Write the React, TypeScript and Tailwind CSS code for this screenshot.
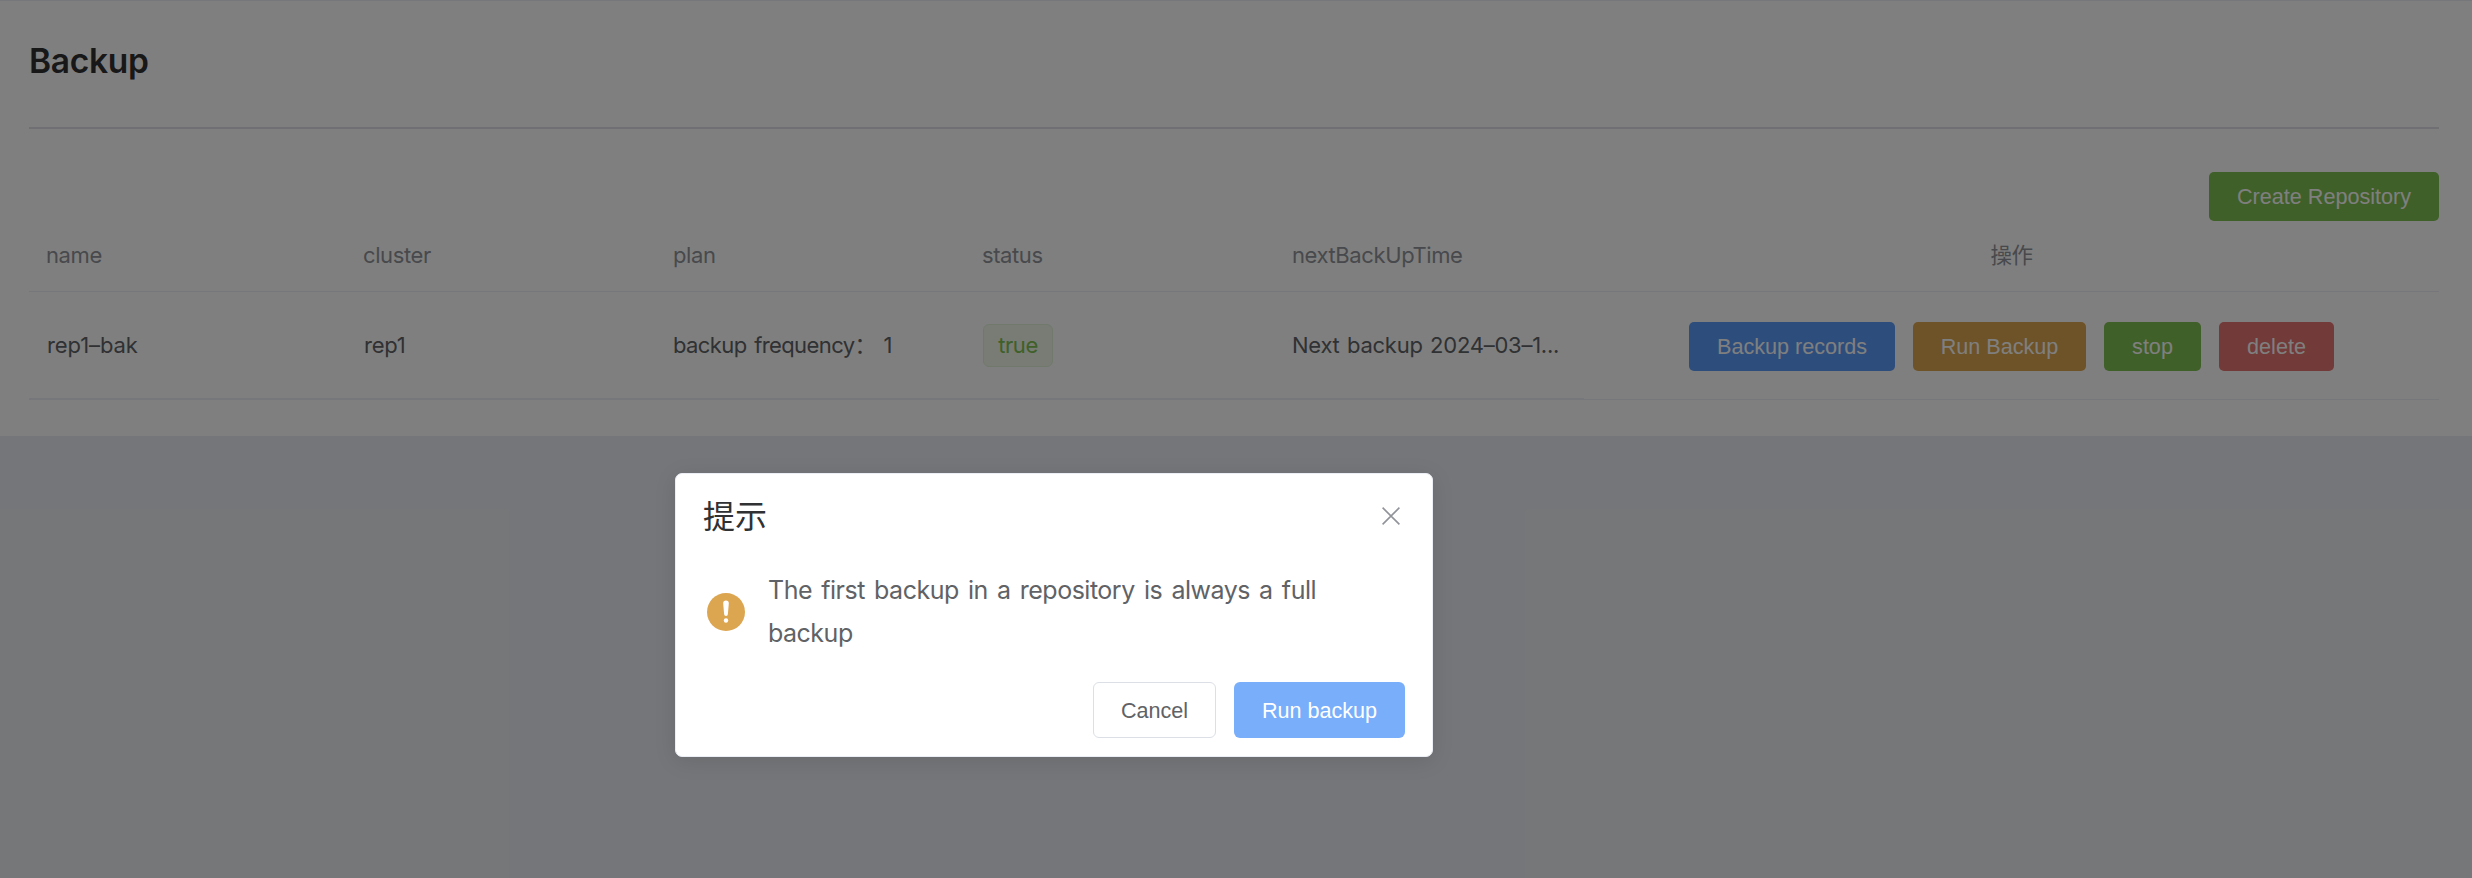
import React from "react";

const columns = "grid grid-cols-[317px_309px_310px_310px_309px_855px]";

type ActionProps = { label: string; className: string };

function Action({ label, className }: ActionProps) {
  return (
    <button
      className={`flex h-[49px] items-center justify-center rounded-[5px] pt-[2px] font-['Liberation_Sans',sans-serif] text-[21.6px] tracking-normal text-white ${className}`}
    >
      {label}
    </button>
  );
}

function BackupPage() {
  return (
    <section className="h-[436px] border-t border-[#ebeef5] bg-white pr-[33px] pl-[29px]">
      <h1 className="flex h-[126px] items-center pb-[5px] text-[33.5px] font-semibold tracking-[-0.3px] text-[#303133]">
        Backup
      </h1>
      <div className="h-[2px] bg-[#dfdfe8]" />
      <div className="mt-[43px] flex justify-end">
        <Action label="Create Repository" className="w-[230px] bg-[#7ec050]" />
      </div>
      <div
        className={`${columns} h-[71px] items-center border-b border-[#ebeef5] pb-[2px] text-[22px] tracking-[-0.4px] text-[#909399]`}
      >
        <div className="pl-[17px]">name</div>
        <div className="pl-[17px]">cluster</div>
        <div className="pl-[18px]">plan</div>
        <div className="pl-[17px]">status</div>
        <div className="pl-[17px]">nextBackUpTime</div>
        <div className="text-center text-[21.5px]">操作</div>
      </div>
      <div className={`${columns} h-[108px] text-[22px] tracking-[-0.4px] text-[#606266]`}>
        <div className="flex items-center border-b-2 border-[#ebeef5] pt-px pl-[18px] tracking-[-0.1px]">rep1–bak</div>
        <div className="flex items-center border-b-2 border-[#ebeef5] pt-px pl-[18px] tracking-[-0.2px]">rep1</div>
        <div className="flex items-center border-b-2 border-[#ebeef5] pt-px pl-[18px] tracking-[-0.6px] [word-spacing:2px]">
          backup frequency： 1
        </div>
        <div className="flex items-center border-b-2 border-[#ebeef5] pt-px pl-[18px]">
          <span className="flex h-[43px] w-[70px] items-center justify-center rounded-[6px] border border-[#e1f3d8] bg-[#f0f9eb] pb-px text-[#7ec050]">
            true
          </span>
        </div>
        <div className="flex items-center border-b-2 border-[#ebeef5] pt-px pl-[17px] tracking-[-0.25px] [word-spacing:1.5px]">
          Next backup 2024–03–1...
        </div>
        <div className="flex items-center justify-center gap-[18px] border-b border-[#ebeef5] pt-[2px]">
          <Action label="Backup records" className="w-[206px] bg-[#5b9af8]" />
          <Action label="Run Backup" className="w-[173px] bg-[#dca550]" />
          <Action label="stop" className="w-[97px] bg-[#7ec050]" />
          <Action label="delete" className="w-[115px] bg-[#e47470]" />
        </div>
      </div>
    </section>
  );
}

function ConfirmDialog() {
  return (
    <div className="absolute left-[675px] top-[473px] flex h-[284px] w-[758px] flex-col rounded-[7px] border border-[#ebeef5] bg-white px-[27px] shadow-[0_4px_22px_0_rgba(0,0,0,0.1)]">
      <div className="flex h-[85px] items-center justify-between">
        <h2 className="text-[32px] leading-none text-[#303133]">提示</h2>
        <svg
          className="mr-[5px] mb-[2px] h-[18px] w-[18px]"
          viewBox="0 0 18 18"
          fill="none"
          stroke="#909399"
          strokeWidth="1.6"
        >
          <path d="M0.6 0.6 17.4 17.4M17.4 0.6 0.6 17.4" />
        </svg>
      </div>
      <div className="flex h-[105px] items-center">
        <svg className="ml-[4px] h-[38px] w-[38px] shrink-0" viewBox="0 0 38 38">
          <circle cx="19" cy="19" r="19" fill="#dca550" />
          <path d="M16.2 10.4a2.8 2.8 0 0 1 5.6 0l-.9 10.6a1.9 1.9 0 0 1-3.8 0z" fill="white" />
          <circle cx="19" cy="27.5" r="2.2" fill="white" />
        </svg>
        <p className="ml-[23px] w-[600px] text-[25px] leading-[43px] tracking-[-0.5px] text-[#606266] [word-spacing:2.7px]">
          The first backup in a repository is always a full
          <br />
          backup
        </p>
      </div>
      <div className="mt-[18px] flex justify-end gap-[18px] font-['Liberation_Sans',sans-serif] text-[21.6px]">
        <button className="h-[56px] w-[123px] rounded-[6px] border border-[#dcdfe6] pt-[2px] text-[#606266]">
          Cancel
        </button>
        <button className="h-[56px] w-[171px] rounded-[6px] bg-[#78aefa] pt-[2px] text-white">Run backup</button>
      </div>
    </div>
  );
}

export default function App() {
  return (
    <main className="relative h-[878px] w-[2472px] overflow-hidden bg-[#ebedf2] font-['Inter','Noto_Sans_CJK_SC',sans-serif]">
      <BackupPage />
      <div className="absolute inset-0 bg-black/50" />
      <ConfirmDialog />
    </main>
  );
}
